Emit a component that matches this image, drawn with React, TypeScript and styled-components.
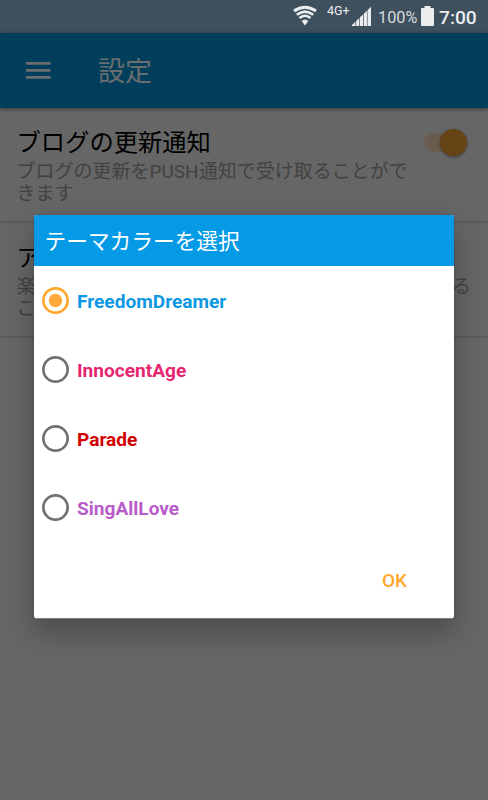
import React from "react";
import styled, { createGlobalStyle } from "styled-components";

const GlobalStyle = createGlobalStyle`
  * { box-sizing: border-box; }
  body { margin: 0; font-family: Roboto, "Noto Sans CJK JP", sans-serif; }
`;

const Screen = styled.div`
  position: relative;
  width: 488px;
  height: 800px;
  overflow: hidden;
  background: #666;
`;

const StatusBar = styled.header`
  height: 33px;
  background: #3e4f5e;
  display: flex;
  justify-content: flex-end;
  color: #ebedee;

  svg { display: block; flex: none; }
`;

const NetworkType = styled.span`
  width: 23px;
  margin: 4px 2px 0 10px;
  font-size: 12.5px;
  line-height: 13px;
  white-space: nowrap;
`;

const BatteryLevel = styled.span`
  width: 39px;
  margin: 8px 4px 0 7px;
  font-size: 16.3px;
  line-height: 19px;
  color: #d8dcdf;
  white-space: nowrap;
`;

const Clock = styled.time`
  width: 49px;
  margin: 6px 0 0 5px;
  font-size: 19.2px;
  font-weight: 500;
  line-height: 23px;
`;

const Toolbar = styled.nav`
  position: relative;
  height: 75px;
  padding-left: 26px;
  display: flex;
  align-items: center;
  background: #013e5c;
  box-shadow: 0 1px 4px rgba(0, 0, 0, 0.45);
`;

const MenuButton = styled.button`
  width: 72px;
  padding: 0;
  border: 0;
  background: none;

  svg { display: block; }
`;

const PageTitle = styled.h1`
  margin: 0;
  padding-top: 2px;
  font-size: 27px;
  font-weight: 400;
  line-height: 40px;
  color: #696d70;
`;

const Setting = styled.section`
  height: 115px;
  padding: 17px 17px 0 16.5px;
  display: flex;
  justify-content: space-between;
  border-bottom: 2px solid #5b5b5b;
`;

const SettingText = styled.div<{ $wide?: boolean }>`
  width: ${(p) => (p.$wide ? "454.5px" : "395px")};
  white-space: nowrap;
`;

const SettingName = styled.h2`
  margin: 0;
  font-size: 24.3px;
  font-weight: 400;
  line-height: 36px;
  color: #000;
`;

const SettingSummary = styled.p`
  margin: 0;
  font-size: 19px;
  line-height: 22px;
  color: #424242;
`;

const SummaryLine = styled.span`
  display: flex;
  justify-content: space-between;
`;

const SwitchTrack = styled.div`
  width: 41px;
  height: 19px;
  margin: 8px 6px 0 0;
  flex: none;
  display: flex;
  align-items: center;
  justify-content: flex-end;
  border-radius: 10px;
  background: #695c4e;
`;

const SwitchThumb = styled.div`
  width: 27px;
  height: 27px;
  margin-right: -2px;
  flex: none;
  border-radius: 50%;
  background: #664416;
  box-shadow: 0 1px 3px rgba(0, 0, 0, 0.45);
`;

const Dialog = styled.div`
  position: absolute;
  left: 34px;
  top: 215px;
  width: 420px;
  height: 403px;
  display: flex;
  flex-direction: column;
  overflow: hidden;
  border-radius: 2px;
  background: #fff;
  box-shadow: 0 1px 0 rgba(140, 140, 140, 0.8), 0 0 2px rgba(0, 0, 0, 0.3),
    0 14px 30px rgba(0, 0, 0, 0.28);
`;

const DialogTitle = styled.h2`
  height: 51px;
  margin: 0;
  padding-left: 10.5px;
  font-size: 21.7px;
  font-weight: 400;
  line-height: 54px;
  color: #fff;
  background: #049ae6;
`;

const Options = styled.div`
  display: flex;
  flex-direction: column;
`;

const Option = styled.label<{ $color: string }>`
  height: 69px;
  padding-left: 8px;
  display: flex;
  align-items: center;
  gap: 8px;
  font-size: 19.1px;
  font-weight: 700;
  line-height: 22px;
  color: ${(p) => p.$color};
`;

const OptionLabel = styled.span`
  padding-top: 2px;
`;

const RadioSvg = styled.svg`
  display: block;
  flex: none;
`;

const Actions = styled.footer`
  display: flex;
  justify-content: flex-end;
  padding: 28px 47px 0 0;
`;

const OkButton = styled.button`
  padding: 0;
  border: 0;
  background: none;
  font: 500 19px/22px Roboto, sans-serif;
  color: #ffa62b;
`;

const themes = [
  { name: "FreedomDreamer", color: "#0c98e2" },
  { name: "InnocentAge", color: "#e72672" },
  { name: "Parade", color: "#d20000" },
  { name: "SingAllLove", color: "#b75cc9" },
];

const Radio = ({ checked }: { checked: boolean }) => (
  <RadioSvg width="27" height="27" viewBox="0 0 27 27">
    <circle
      cx="13.5"
      cy="13.5"
      r="12.15"
      fill="none"
      stroke={checked ? "#ffa62d" : "#717171"}
      strokeWidth="2.7"
    />
    {checked && <circle cx="13.5" cy="13.5" r="6.7" fill="#ffa93d" />}
  </RadioSvg>
);

const WifiIcon = () => (
  <svg width="24" height="33" viewBox="0 0 24 33" fill="none" stroke="currentColor">
    <path d="M1 11Q12 3.4 23 11" strokeWidth="3" />
    <path d="M3.8 14.8Q12 8.4 20.2 14.8" strokeWidth="2.7" />
    <path d="M6.5 18Q12 13.4 17.5 18" strokeWidth="2.5" />
    <path d="M8.6 21Q12 18 15.4 21L12 25.5Z" fill="currentColor" stroke="none" />
  </svg>
);

const SignalIcon = () => (
  <svg width="19" height="33" viewBox="0 0 19 33" fill="currentColor">
    <path d="M0 26V25L3.5 21.8V26ZM4.2 26V21L7.3 18.1V26ZM8 26V17.3L11.1 14.4V26ZM11.8 26V13.7L14.9 10.8V26ZM15.5 26V10.2L19 6.8V26Z" />
  </svg>
);

const BatteryIcon = () => (
  <svg width="13" height="33" viewBox="0 0 13 33" fill="currentColor">
    <path d="M3.5 6h6v2H12q1 0 1 1v16q0 1-1 1H1q-1 0-1-1V9q0-1 1-1h2.5Z" />
  </svg>
);

export default function App() {
  return (
    <Screen>
      <GlobalStyle />
      <StatusBar>
        <WifiIcon />
        <NetworkType>4G+</NetworkType>
        <SignalIcon />
        <BatteryLevel>100%</BatteryLevel>
        <BatteryIcon />
        <Clock>7:00</Clock>
      </StatusBar>
      <Toolbar>
        <MenuButton aria-label="メニュー">
          <svg width="25" height="17" viewBox="0 0 25 17" fill="#6b6e70">
            <path d="M0 0h24.5v2.8H0ZM0 7h24.5v2.8H0ZM0 14h24.5v2.8H0Z" />
          </svg>
        </MenuButton>
        <PageTitle>設定</PageTitle>
      </Toolbar>
      <Setting>
        <SettingText>
          <SettingName>ブログの更新通知</SettingName>
          <SettingSummary>
            ブログの更新をPUSH通知で受け取ることがで
            <br />
            きます
          </SettingSummary>
        </SettingText>
        <SwitchTrack role="switch" aria-checked="true">
          <SwitchThumb />
        </SwitchTrack>
      </Setting>
      <Setting>
        <SettingText $wide>
          <SettingName>ア</SettingName>
          <SettingSummary>
            <SummaryLine>
              <span>楽</span>
              <span>る</span>
            </SummaryLine>
            こ
          </SettingSummary>
        </SettingText>
      </Setting>
      <Dialog role="dialog">
        <DialogTitle>テーマカラーを選択</DialogTitle>
        <Options>
          {themes.map((theme, i) => (
            <Option key={theme.name} $color={theme.color}>
              <Radio checked={i === 0} />
              <OptionLabel>{theme.name}</OptionLabel>
            </Option>
          ))}
        </Options>
        <Actions>
          <OkButton>OK</OkButton>
        </Actions>
      </Dialog>
    </Screen>
  );
}
